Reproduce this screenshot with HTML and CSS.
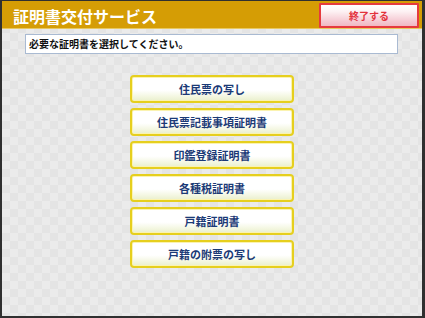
FILE: index.html
```html
<!DOCTYPE html>
<html lang="ja">
<head>
<meta charset="utf-8">
<link rel="stylesheet" href="styles.css">
</head>
<body>
<div class="frame">
  <header class="header">
    <h1 class="title">証明書交付サービス</h1>
    <button class="end-btn">終了する</button>
  </header>
  <div class="notice">必要な証明書を選択してください。</div>
  <nav class="menu">
    <button class="menu-btn">住民票の写し</button>
    <button class="menu-btn">住民票記載事項証明書</button>
    <button class="menu-btn">印鑑登録証明書</button>
    <button class="menu-btn">各種税証明書</button>
    <button class="menu-btn">戸籍証明書</button>
    <button class="menu-btn">戸籍の附票の写し</button>
  </nav>
</div>
</body>
</html>
```
FILE: styles.css
```css
* { box-sizing: border-box; }
html, body { margin: 0; padding: 0; }
body {
  width: 425px;
  height: 318px;
  background: #2e2e2e;
  font-family: "Noto Sans CJK JP", "Noto Sans", sans-serif;
}
.frame {
  width: 425px;
  height: 318px;
  border-style: solid;
  border-color: #303030;
  border-width: 1px 3px 2px 2px;
  background-color: #e8e8e8;
  background-image: conic-gradient(#e4e4e4 25%, #ebebeb 0 50%, #e4e4e4 0 75%, #ebebeb 0);
  background-size: 16px 16px;
  display: flex;
  flex-direction: column;
}
.header {
  height: 28px;
  background: #d59d05;
  display: flex;
  align-items: flex-start;
  justify-content: space-between;
  padding: 2px 3px 0 11px;
  border-bottom: 1px solid #e8c860;
}
.title {
  margin: 2px 0 0 0;
  font-size: 16px;
  line-height: 22px;
  font-weight: bold;
  color: #ffffff;
}
.end-btn {
  width: 100px;
  height: 25px;
  border: 2px solid #e63a3e;
  border-radius: 1px;
  background: linear-gradient(#ffffff 0%, #fdf2f4 30%, #f6cfd7 70%, #f0b8c3 100%);
  color: #e3323c;
  font-family: inherit;
  font-size: 10px;
  font-weight: bold;
  padding: 0;
  line-height: 21px;
}
.notice {
  margin: 5px 0 0 23px;
  width: 373px;
  height: 20px;
  background: #ffffff;
  border: 1px solid #a9bad2;
  font-size: 10px;
  line-height: 18px;
  padding-left: 3px;
  color: #111111;
  font-weight: bold;
}
.menu {
  margin-top: 21px;
  display: flex;
  flex-direction: column;
  align-items: center;
  gap: 5px;
}
.menu-btn {
  width: 164px;
  height: 28px;
  border: 2px solid #e6cf1e;
  border-radius: 4px;
  background: linear-gradient(#ffffff 0%, #ffffff 55%, #f4f7e2 80%, #e9efcc 100%);
  box-shadow: inset 0 0 0 1px #fbf3b0;
  color: #1b3a76;
  font-family: inherit;
  font-size: 11px;
  font-weight: bold;
  padding: 0;
  line-height: 24px;
}
```
